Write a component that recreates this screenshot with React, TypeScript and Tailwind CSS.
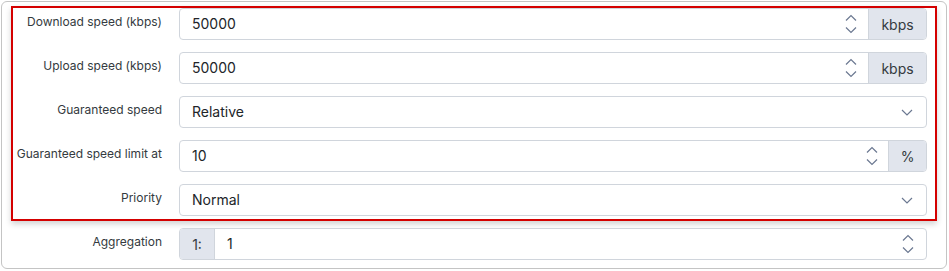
import React from "react";

const font = { fontFamily: "Inter, 'Noto Sans', sans-serif" };

function Spinner() {
  return (
    <svg width="12" height="20" viewBox="0 0 12 20" fill="none" className="shrink-0">
      <path d="M1 6.5 L6 1.5 L11 6.5" stroke="#6b7891" strokeWidth="1.2" />
      <path d="M1 13.5 L6 18.5 L11 13.5" stroke="#6b7891" strokeWidth="1.2" />
    </svg>
  );
}

function ChevronDown() {
  return (
    <svg width="12" height="7" viewBox="0 0 12 7" fill="none" className="shrink-0">
      <path d="M1 1 L6 6 L11 1" stroke="#6b7891" strokeWidth="1.2" />
    </svg>
  );
}

function Label({ children }: { children: React.ReactNode }) {
  return (
    <div className="text-right text-[12px] leading-4 text-[#343a40] pt-[6px] whitespace-nowrap">
      {children}
    </div>
  );
}

function NumberInput({
  value,
  addon,
  addonWidth,
  spinPad,
}: {
  value: string;
  addon?: string;
  addonWidth?: string;
  spinPad: string;
}) {
  return (
    <div className="flex h-[32px] rounded-[4px] border border-[#d0d5dc] bg-white overflow-hidden">
      <div className="flex flex-1 items-center pl-[12px] text-[14px] leading-5 text-[#212529]">
        {value}
      </div>
      <div className={`flex items-center ${spinPad}`}>
        <Spinner />
      </div>
      {addon && (
        <div
          className={`flex items-center justify-center bg-[#e1e5ed] border-l border-[#d0d5dc] text-[14px] text-[#343a40] ${addonWidth}`}
        >
          {addon}
        </div>
      )}
    </div>
  );
}

function SelectInput({ value }: { value: string }) {
  return (
    <div className="flex h-[32px] items-center rounded-[4px] border border-[#d0d5dc] bg-white pl-[12px] pr-[13px]">
      <div className="flex-1 text-[14px] leading-5 text-[#212529]">{value}</div>
      <ChevronDown />
    </div>
  );
}

export default function App() {
  return (
    <div className="w-[949px] h-[271px] bg-white pt-[1px] pl-[1px]" style={font}>
      <div className="w-[946px] h-[268px] rounded-[6px] border border-[#c4c4c4] bg-white">
        <div className="ml-[9px] mt-[4px] w-[926px] border-2 border-[#d40000] pt-0 pb-[3px] shadow-[0_3px_6px_rgba(0,0,0,0.18)]">
          <div className="grid grid-cols-[149px_748px] gap-x-[17px] gap-y-[12px]">
            <Label>Download speed (kbps)</Label>
            <NumberInput value="50000" addon="kbps" addonWidth="w-[58px]" spinPad="pr-[11px]" />

            <Label>Upload speed (kbps)</Label>
            <NumberInput value="50000" addon="kbps" addonWidth="w-[58px]" spinPad="pr-[11px]" />

            <Label>Guaranteed speed</Label>
            <SelectInput value="Relative" />

            <Label>Guaranteed speed limit at</Label>
            <NumberInput value="10" addon="%" addonWidth="w-[38px]" spinPad="pr-[10px]" />

            <Label>Priority</Label>
            <SelectInput value="Normal" />
          </div>
        </div>
        <div className="mt-[7px] ml-[11px] grid grid-cols-[149px_748px] gap-x-[17px]">
          <Label>Aggregation</Label>
          <div className="flex h-[32px] rounded-[4px] border border-[#d0d5dc] bg-white overflow-hidden">
            <div className="flex w-[35px] items-center justify-center bg-[#e1e5ed] border-r border-[#d0d5dc] text-[14px] text-[#343a40]">
              1:
            </div>
            <div className="flex flex-1 items-center pl-[12px] text-[14px] leading-5 text-[#212529]">
              1
            </div>
            <div className="flex items-center pr-[12px]">
              <Spinner />
            </div>
          </div>
        </div>
      </div>
    </div>
  );
}
